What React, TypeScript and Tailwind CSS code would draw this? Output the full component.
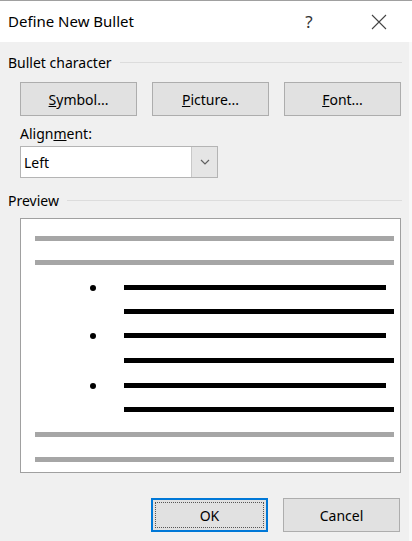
import React from "react";

const font = { fontFamily: '"Noto Sans", "Open Sans", Arial, sans-serif' };

function Btn({ children, className = "" }: { children: React.ReactNode; className?: string }) {
  return (
    <div
      className={`flex items-center justify-center h-[34px] bg-[#e1e1e1] border border-[#adadad] text-[14px] text-black ${className}`}
    >
      {children}
    </div>
  );
}

const lines: { top: number; kind: "gray" | "bullet" | "cont" }[] = [
  { top: 17, kind: "gray" },
  { top: 19, kind: "gray" },
  { top: 20, kind: "bullet" },
  { top: 19, kind: "cont" },
  { top: 19, kind: "bullet" },
  { top: 20, kind: "cont" },
  { top: 20, kind: "bullet" },
  { top: 19, kind: "cont" },
  { top: 20, kind: "gray" },
  { top: 20, kind: "gray" },
];

export default function App() {
  return (
    <div className="w-[412px] h-[541px] flex flex-col bg-white overflow-hidden" style={font}>
      <div className="h-[42px] shrink-0 border-t border-[#a0a0a0] bg-white flex items-center">
        <div className="pl-[8px] text-[15px] text-black flex-1">Define New Bullet</div>
        <div className="text-[17px] text-[#333] w-[20px] mr-[52px] text-center">?</div>
        <svg width="16" height="16" viewBox="0 0 16 16" className="mr-[25px]">
          <path d="M1 1 L15 15 M15 1 L1 15" stroke="#444" strokeWidth="1.1" fill="none" />
        </svg>
      </div>
      <div className="flex-1 flex">
        <div className="flex-1 bg-[#f0f0f0] flex flex-col pl-[8px] pr-[7px]">
          <div className="mt-[10px] h-[20px] flex items-center text-[14px] text-black">
            <span>Bullet character</span>
            <div className="flex-1 h-px bg-[#dcdcdc] ml-[8px]" />
          </div>
          <div className="mt-[10px] pl-[12px] flex gap-[15px]">
            <Btn className="w-[117px]">
              <span><span className="underline">S</span>ymbol...</span>
            </Btn>
            <Btn className="w-[117px]">
              <span><span className="underline">P</span>icture...</span>
            </Btn>
            <Btn className="w-[117px]">
              <span><span className="underline">F</span>ont...</span>
            </Btn>
          </div>
          <div className="mt-[8px] pl-[12px] h-[18px] flex items-center text-[14px] text-black">
            <span>Align<span className="underline">m</span>ent:</span>
          </div>
          <div className="mt-[4px] ml-[12px] w-[198px] h-[32px] flex border border-[#b4b4b4] bg-white">
            <div className="flex-1 flex items-center pl-[3px] text-[14px] text-black">Left</div>
            <div className="w-[26px] bg-[#e5e5e5] border-l border-[#c8c8c8] flex items-center justify-center">
              <svg width="10" height="6" viewBox="0 0 10 6">
                <path d="M1 1 L5 5 L9 1" stroke="#606060" strokeWidth="1.2" fill="none" />
              </svg>
            </div>
          </div>
          <div className="mt-[12px] h-[20px] flex items-center text-[14px] text-black">
            <span>Preview</span>
            <div className="flex-1 h-px bg-[#dcdcdc] ml-[8px]" />
          </div>
          <div className="mt-[8px] ml-[12px] w-[381px] h-[255px] border border-[#a0a0a0] bg-white flex flex-col pl-[14px] pr-[6px]">
            {lines.map((l, i) => (
              <div key={i} className="relative h-[5px] shrink-0" style={{ marginTop: l.top }}>
                {l.kind === "gray" && <div className="h-[5px] bg-[#a6a6a6]" />}
                {l.kind === "cont" && <div className="ml-[89px] h-[5px] bg-black" />}
                {l.kind === "bullet" && (
                  <div className="flex items-center h-[5px]">
                    <div className="ml-[55px] w-[6px] h-[6px] rounded-full bg-black shrink-0" />
                    <div className="ml-[28px] mr-[8px] flex-1 h-[5px] bg-black" />
                  </div>
                )}
              </div>
            ))}
          </div>
          <div className="mt-[25px] flex justify-end gap-[15px] pr-[2px]">
            <div className="relative w-[117px] h-[34px] bg-[#e1e1e1] border-2 border-[#0078d7] flex items-center justify-center text-[14px] text-black">
              <div className="absolute inset-[2px] border border-dotted border-[#555]" />
              <span className="relative">OK</span>
            </div>
            <Btn className="w-[117px]">Cancel</Btn>
          </div>
        </div>
        <div className="w-[3px] bg-[#f8f8f8]" />
      </div>
    </div>
  );
}
